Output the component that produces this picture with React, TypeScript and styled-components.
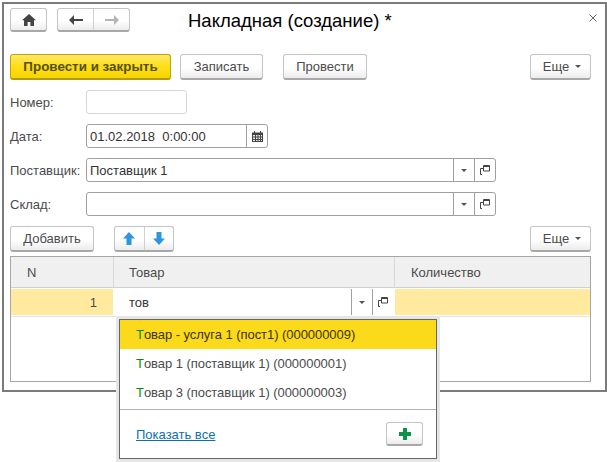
import React from 'react';
import styled, { createGlobalStyle } from 'styled-components';

const GlobalStyle = createGlobalStyle`
    html, body {
        margin: 0;
        padding: 0;
        background: #fff;
        font-family: 'Liberation Sans', Arial, sans-serif;
        font-size: 13px;
        color: #4b4b4b;
    }
`;

const Page = styled.div`
    width: 607px;
    height: 462px;
    padding: 2px 0 0 2px;
    box-sizing: border-box;
    overflow: hidden;
`;

const Window = styled.div`
    width: 605px;
    height: 390px;
    box-sizing: border-box;
    border: 2px solid #7b7b7b;
    padding: 4px 14px 0 6px;
    background: #fff;
`;

const TopBar = styled.div`
    display: flex;
    align-items: center;
    height: 24px;
`;

const Title = styled.h1`
    margin: 2px 0 0 58px;
    font-size: 18.5px;
    font-weight: normal;
    color: #000;
`;

const Close = styled.svg`
    margin: -5px -6px 0 auto;
    width: 8px;
    height: 8px;
`;

const Row = styled.div<{ $top: number }>`
    display: flex;
    align-items: center;
    height: 26px;
    margin-top: ${(p) => p.$top}px;
`;

const Button = styled.button<{ $width: number; $left?: number; $height?: number }>`
    display: flex;
    align-items: center;
    justify-content: center;
    width: ${(p) => p.$width}px;
    height: ${(p) => p.$height ?? 26}px;
    margin-left: ${(p) => p.$left ?? 0}px;
    padding: 0;
    box-sizing: border-box;
    border: 1px solid #c4c4c4;
    border-bottom: 2px solid #a8a8a8;
    border-radius: 3px;
    background: linear-gradient(#ffffff 0%, #ffffff 55%, #ececec 100%);
    font: inherit;
    color: #4b4b4b;
`;

const PrimaryButton = styled(Button)`
    border: 1px solid #c2a400;
    border-bottom: 2px solid #b39a10;
    background: linear-gradient(#ffe86a 0%, #ffdf1c 45%, #f6d500 100%);
    font-size: 13.4px;
    font-weight: bold;
    color: #55500f;
`;

const MoreButton = styled(Button)`
    margin-left: auto;
    gap: 6px;
    padding-left: 3px;
`;

const Caret = styled.span`
    display: inline-block;
    width: 0;
    height: 0;
    border-left: 3px solid transparent;
    border-right: 3px solid transparent;
    border-top: 3px solid #555;
`;

const Group = styled.div<{ $width: number; $left: number; $height: number }>`
    display: flex;
    width: ${(p) => p.$width}px;
    height: ${(p) => p.$height}px;
    margin-left: ${(p) => p.$left}px;
    box-sizing: border-box;
    border: 1px solid #c4c4c4;
    border-bottom: 2px solid #a8a8a8;
    border-radius: 3px;
    background: linear-gradient(#ffffff 0%, #ffffff 55%, #ececec 100%);
`;

const GroupPart = styled.div<{ $grow?: boolean }>`
    flex: ${(p) => (p.$grow ? 1 : '0 0 auto')};
    display: flex;
    align-items: center;
    justify-content: center;
    & + & {
        border-left: 1px solid #d0d0d0;
    }
`;

const Form = styled.div`
    display: grid;
    grid-template-columns: 76px 1fr;
    grid-auto-rows: 24px;
    row-gap: 10px;
    margin-top: 10px;
    align-items: center;
`;

const Label = styled.div`
    white-space: nowrap;
`;

const Field = styled.div<{ $width: number; $light?: boolean }>`
    display: flex;
    width: ${(p) => p.$width}px;
    height: 24px;
    box-sizing: border-box;
    border: 1px solid ${(p) => (p.$light ? '#d6d6d6' : '#a0a0a0')};
    border-radius: 3px;
    background: #fff;
`;

const FieldText = styled.div`
    flex: 1;
    display: flex;
    align-items: center;
    padding-left: 3px;
    color: #333;
    white-space: pre;
`;

const FieldIcon = styled.div<{ $width: number }>`
    flex: 0 0 ${(p) => p.$width}px;
    box-sizing: border-box;
    display: flex;
    align-items: center;
    justify-content: center;
    border-left: 1px solid #a0a0a0;
`;

const Table = styled.div`
    position: relative;
    height: 126px;
    margin-top: 4px;
    box-sizing: border-box;
    border: 1px solid #a6a6a6;
`;

const Columns = styled.div`
    display: grid;
    grid-template-columns: 103px 281px 1fr;
`;

const HeadCell = styled.div<{ $pad: number }>`
    height: 30px;
    display: flex;
    align-items: center;
    padding-left: ${(p) => p.$pad}px;
    background: #f0f0f0;
    border-right: 1px solid #d8d8d8;
    border-bottom: 1px solid #d0d0d0;
    &:last-child {
        border-right: 0;
    }
`;

const BodyRow = styled(Columns)`
    margin-top: 1px;
    height: 27px;
    border-bottom: 1px solid #e4e4e4;
`;

const YellowCell = styled.div`
    height: 26px;
    display: flex;
    align-items: center;
    justify-content: flex-end;
    padding-right: 16px;
    background: #ffea9f;
    margin-right: 1px;
    &:last-child {
        margin-right: 0;
    }
`;

const EditCell = styled.div`
    height: 26px;
    display: flex;
    color: #333;
    margin-right: 2px;
`;

const EditText = styled.div`
    flex: 1;
    display: flex;
    align-items: center;
    padding-left: 15px;
`;

const Popup = styled.div`
    position: absolute;
    left: 108px;
    top: 62px;
    width: 318px;
    height: 140px;
    box-sizing: border-box;
    border: 1px solid #666;
    background: #fff;
    box-shadow: 0 0 0 3px #e6e6e6;
`;

const PopupItem = styled.div<{ $active?: boolean }>`
    height: 29px;
    display: flex;
    align-items: center;
    padding-left: 16px;
    white-space: pre;
    letter-spacing: -0.05px;
    background: ${(p) => (p.$active ? '#fbda1c' : 'transparent')};
    color: ${(p) => (p.$active ? '#3c3400' : '#4b4b4b')};
`;

const Match = styled.span`
    color: #0b8a00;
`;

const PopupFooter = styled.div`
    height: 48px;
    margin-top: 2px;
    display: flex;
    align-items: center;
    justify-content: space-between;
    padding: 0 13px 0 16px;
    border-top: 1px solid #b4b4b4;
`;

const ShowAll = styled.a`
    color: #0f6fb5;
    text-decoration: underline;
`;

const HomeIcon = () => (
    <svg width="14" height="12" viewBox="0 0 14 12">
        <path d="M7 0 0 6.2h2V12h3.6V8h2.800v4H12V6.200h2L7 0z" fill="#444" />
    </svg>
);

const ArrowIcon = ({ dir, color }: { dir: 'left' | 'right'; color: string }) => (
    <svg width="14" height="10" viewBox="0 0 14 10">
        <path
            d={dir === 'left' ? 'M0 5 5 0v4h9v2H5v4L0 5z' : 'M14 5 9 0v4H0v2h9v4l5-5z'}
            fill={color}
        />
    </svg>
);

const VerticalArrow = ({ dir }: { dir: 'up' | 'down' }) => (
    <svg width="12" height="13" viewBox="0 0 12 13">
        <path
            d={dir === 'up' ? 'M6 0 0 6.500h3.500V13h5V6.500H12L6 0z' : 'M6 13 0 6.500h3.500V0h5v6.500H12L6 13z'}
            fill="#2f96dc"
        />
    </svg>
);

const CalendarIcon = () => (
    <svg width="11" height="11" viewBox="0 0 11 11">
        <path d="M0 1.500h11V11H0z" fill="#444" />
        <path d="M2 0h1v2H2zM8 0h1v2H8z" fill="#444" />
        <path
            d="M1 4h2v1.500H1zM4 4h1.500v1.500H4zM6.500 4H8v1.500H6.500zM9 4h1v1.500H9zM1 6.500h2V8H1zM4 6.500h1.500V8H4zM6.500 6.500H8V8H6.500zM9 6.500h1V8H9zM1 9h2v1H1zM4 9h1.500v1H4zM6.500 9H8v1H6.500zM9 9h1v1H9z"
            fill="#eee"
        />
    </svg>
);

const OpenIcon = () => (
    <svg width="10" height="10" viewBox="0 0 10 10" fill="none" stroke="#444">
        <path d="M3.500.5h6v5.500h-6z" />
        <path d="M3 3.500H.5v6h1.500" />
        <path d="M3.500 1.500h6" />
    </svg>
);

const PlusIcon = () => (
    <svg width="12" height="12" viewBox="0 0 12 12">
        <path d="M4 0h4v4h4v4H8v4H4V8H0V4h4z" fill="#0c9347" />
    </svg>
);

const SelectField = ({ value }: { value: string }) => (
    <Field $width={410}>
        <FieldText>{value}</FieldText>
        <FieldIcon $width={21}>
            <Caret />
        </FieldIcon>
        <FieldIcon $width={21}>
            <OpenIcon />
        </FieldIcon>
    </Field>
);

const App: React.FC = () => {
    return (
        <Page>
            <GlobalStyle />
            <Window>
                <TopBar>
                    <Button $width={37} $height={24}>
                        <HomeIcon />
                    </Button>
                    <Group $width={73} $left={10} $height={24}>
                        <GroupPart $grow>
                            <ArrowIcon dir="left" color="#444" />
                        </GroupPart>
                        <GroupPart $grow>
                            <ArrowIcon dir="right" color="#b4b4b4" />
                        </GroupPart>
                    </Group>
                    <Title>Накладная (создание) *</Title>
                    <Close viewBox="0 0 8 8" fill="none" stroke="#666">
                        <path d="M.5.5l7 7M7.500.5l-7 7" />
                    </Close>
                </TopBar>

                <Row $top={22}>
                    <PrimaryButton $width={161}>Провести и закрыть</PrimaryButton>
                    <Button $width={83} $left={9}>
                        Записать
                    </Button>
                    <Button $width={84} $left={20}>
                        Провести
                    </Button>
                    <MoreButton $width={61}>
                        Еще <Caret />
                    </MoreButton>
                </Row>

                <Form>
                    <Label>Номер:</Label>
                    <Field $width={101} $light />
                    <Label>Дата:</Label>
                    <Field $width={182}>
                        <FieldText>01.02.2018  0:00:00</FieldText>
                        <FieldIcon $width={21}>
                            <CalendarIcon />
                        </FieldIcon>
                    </Field>
                    <Label>Поставщик:</Label>
                    <SelectField value="Поставщик 1" />
                    <Label>Склад:</Label>
                    <SelectField value="" />
                </Form>

                <Row $top={10}>
                    <Button $width={84}>Добавить</Button>
                    <Group $width={60} $left={20} $height={26}>
                        <GroupPart $grow>
                            <VerticalArrow dir="up" />
                        </GroupPart>
                        <GroupPart $grow>
                            <VerticalArrow dir="down" />
                        </GroupPart>
                    </Group>
                    <MoreButton $width={61}>
                        Еще <Caret />
                    </MoreButton>
                </Row>

                <Table>
                    <Columns>
                        <HeadCell $pad={16}>N</HeadCell>
                        <HeadCell $pad={15}>Товар</HeadCell>
                        <HeadCell $pad={16}>Количество</HeadCell>
                    </Columns>
                    <BodyRow>
                        <YellowCell>1</YellowCell>
                        <EditCell>
                            <EditText>тов</EditText>
                            <FieldIcon $width={21}>
                                <Caret />
                            </FieldIcon>
                            <FieldIcon $width={21}>
                                <OpenIcon />
                            </FieldIcon>
                        </EditCell>
                        <YellowCell />
                    </BodyRow>
                    <Popup>
                        <PopupItem $active>
                            <Match>Т</Match>овар - услуга 1 (пост1) (000000009)
                        </PopupItem>
                        <PopupItem>
                            <Match>Т</Match>овар 1 (поставщик 1) (000000001)
                        </PopupItem>
                        <PopupItem>
                            <Match>Т</Match>овар 3 (поставщик 1) (000000003)
                        </PopupItem>
                        <PopupFooter>
                            <ShowAll>Показать все</ShowAll>
                            <Button $width={37} $height={24}>
                                <PlusIcon />
                            </Button>
                        </PopupFooter>
                    </Popup>
                </Table>
            </Window>
        </Page>
    );
};

export default App;
